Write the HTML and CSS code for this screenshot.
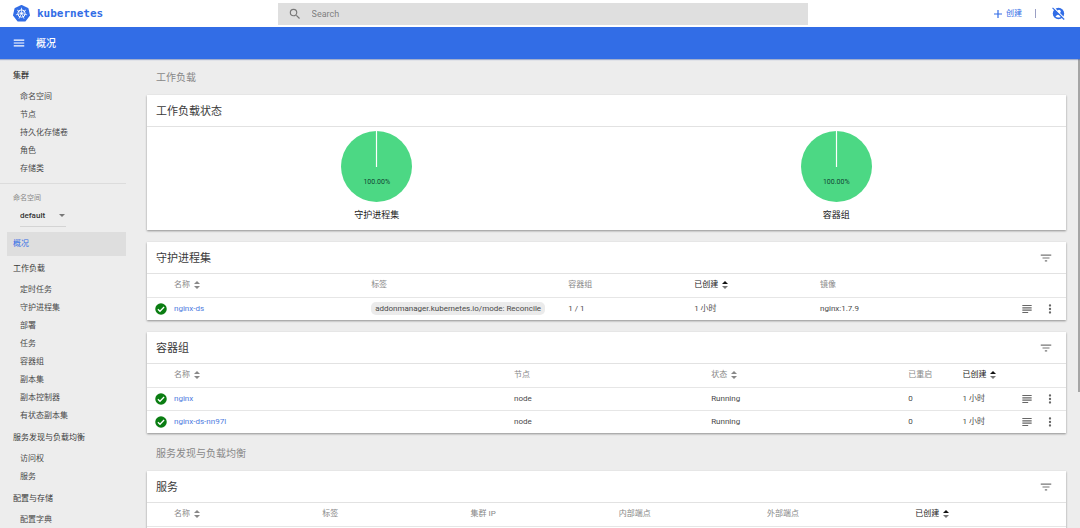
FILE: index.html
```html
<!DOCTYPE html>
<html lang="zh-CN">
<head>
<meta charset="utf-8">
<meta name="viewport" content="width=device-width, initial-scale=1">
<title>概况 - kubernetes</title>
<link rel="stylesheet" href="styles.css">
</head>
<body>
<svg class="defs" aria-hidden="true">
  <symbol id="i-ok" viewBox="0 0 24 24"><circle cx="12" cy="12" r="11.5" fill="#0a7d12"/><path d="M5.8 12.4l4.2 4.1 8.2-8.4" fill="none" stroke="#fff" stroke-width="2.6"/></symbol>
  <symbol id="i-filter" viewBox="0 0 24 24"><path d="M10 18h4v-2h-4v2zM3 6v2h18V6H3zm3 7h12v-2H6v2z"/></symbol>
  <symbol id="i-logs" viewBox="0 0 24 24"><path d="M14 17H4v2h10v-2zm6-8H4v2h16V9zM4 15h16v-2H4v2zM4 5v2h16V5H4z"/></symbol>
  <symbol id="i-more" viewBox="0 0 24 24"><path d="M12 8a2 2 0 1 0 0-4 2 2 0 0 0 0 4zm0 2a2 2 0 1 0 0 4 2 2 0 0 0 0-4zm0 6a2 2 0 1 0 0 4 2 2 0 0 0 0-4z"/></symbol>
  <symbol id="i-sort" viewBox="0 0 6 8"><path d="M0 3l3-3 3 3z"/><path d="M0 5l3 3 3-3z"/></symbol>
  <symbol id="i-sorted" viewBox="0 0 6 8"><path d="M0 3l3-3 3 3z" fill="#111"/><path d="M0 5l3 3 3-3z" fill="#777"/></symbol>
  <symbol id="i-pie" viewBox="0 0 71 71"><circle cx="35.5" cy="35.5" r="35.5" fill="#4cd884"/><path d="M35.5 0v36" stroke="#fff" stroke-width="1.2"/></symbol>
</svg>

<header class="top">
  <a class="brand" href="#">
    <svg class="brand-mark" viewBox="0 0 34 34" aria-hidden="true">
      <path d="M17 1.5L29.5 7.5L32.5 20.8L24 31.5H10L1.5 20.8L4.500 7.500Z" fill="#326de6" stroke="#326de6" stroke-width="3" stroke-linejoin="round"/>
      <g fill="none" stroke="#fff">
        <circle cx="17" cy="17" r="7.4" stroke-width="2"/>
        <path stroke-width="1.500" d="M17 15V5.500M18.600 15.700L26 9.800M19 17.500L28.200 19.600M18 18.800L22.100 27.400M16 18.800L11.900 27.400M15 17.500L5.800 19.600M15.400 15.700L8 9.800"/>
      </g>
      <circle cx="17" cy="17" r="2.400" fill="#fff"/>
    </svg>
    <span>kubernetes</span>
  </a>
  <form class="search" role="search">
    <svg class="icon" viewBox="0 0 24 24" aria-hidden="true"><path d="M15.500 14h-.79l-.28-.27A6.470 6.470 0 0 0 16 9.500 6.500 6.500 0 1 0 9.500 16c1.610 0 3.090-.59 4.230-1.570l.27.28v.79l5 4.990L20.490 19l-4.990-5zm-6 0a4.500 4.500 0 1 1 0-9 4.500 4.500 0 0 1 0 9z"/></svg>
    <input type="search" placeholder="Search" aria-label="Search">
  </form>
  <div class="tools">
    <button class="create" type="button">
      <svg viewBox="0 0 8 8" aria-hidden="true"><path d="M4 0v8M0 4h8" stroke="currentColor" stroke-width="1.200"/></svg>
      创建
    </button>
    <span class="divider"></span>
    <button class="account" type="button" aria-label="用户">
      <svg viewBox="0 0 24 24" aria-hidden="true">
        <circle cx="12" cy="12" r="10.500" fill="#326de6"/>
        <circle cx="13" cy="8.500" r="3.200" fill="#fff"/>
        <path d="M6.500 17.500c1.500-2.500 3.500-3.300 5.500-3.300s4 .8 5.500 3.300c-2.500 2.800-8.500 2.800-11 0z" fill="#fff"/>
        <path d="M3 1l20 20" stroke="#fff" stroke-width="2.500"/>
        <path d="M1 1.500L22.500 23" stroke="#326de6" stroke-width="2.200"/>
      </svg>
    </button>
  </div>
</header>

<div class="bar">
  <button type="button" aria-label="菜单"><svg class="icon" viewBox="0 0 24 24" aria-hidden="true"><path d="M3 18h18v-2H3v2zm0-5h18v-2H3v2zm0-7v2h18V6H3z"/></svg></button>
  <h1>概况</h1>
</div>

<div class="page">
  <nav class="side">
    <section class="group">
      <h2 class="strong">集群</h2>
      <a href="#">命名空间</a><a href="#">节点</a><a href="#">持久化存储卷</a><a href="#">角色</a><a href="#">存储类</a>
    </section>
    <div class="namespace">
      <label for="ns">命名空间</label>
      <div class="select">
        <select id="ns"><option>default</option></select>
        <svg viewBox="0 0 6 3" aria-hidden="true"><path d="M0 0h6L3 3z"/></svg>
      </div>
    </div>
    <a class="current" href="#" aria-current="page">概况</a>
    <section class="group">
      <h2>工作负载</h2>
      <a href="#">定时任务</a><a href="#">守护进程集</a><a href="#">部署</a><a href="#">任务</a><a href="#">容器组</a><a href="#">副本集</a><a href="#">副本控制器</a><a href="#">有状态副本集</a>
    </section>
    <section class="group">
      <h2>服务发现与负载均衡</h2>
      <a href="#">访问权</a><a href="#">服务</a>
    </section>
    <section class="group">
      <h2>配置与存储</h2>
      <a href="#">配置字典</a>
    </section>
  </nav>

  <main class="content">
    <section>
      <h2 class="area">工作负载</h2>
      <article class="card">
        <header><h3>工作负载状态</h3></header>
        <div class="charts">
          <figure>
            <div class="pie"><svg aria-hidden="true"><use href="#i-pie"/></svg><span>100.00%</span></div>
            <figcaption>守护进程集</figcaption>
          </figure>
          <figure>
            <div class="pie"><svg aria-hidden="true"><use href="#i-pie"/></svg><span>100.00%</span></div>
            <figcaption>容器组</figcaption>
          </figure>
        </div>
      </article>

      <article class="card">
        <header><h3>守护进程集</h3><button type="button" aria-label="筛选"><svg class="icon"><use href="#i-filter"/></svg></button></header>
        <table>
          <colgroup><col class="c-status"><col class="c-wide"><col class="c-wide"><col class="c-mid"><col class="c-mid"><col><col class="c-actions"></colgroup>
          <thead><tr><th></th><th>名称 <svg class="sort"><use href="#i-sort"/></svg></th><th>标签</th><th>容器组</th><th class="sorted">已创建 <svg class="sort"><use href="#i-sorted"/></svg></th><th>镜像</th><th></th></tr></thead>
          <tbody>
            <tr>
              <td><svg class="ok"><use href="#i-ok"/></svg></td>
              <td><a href="#">nginx-ds</a></td>
              <td><span class="chip">addonmanager.kubernetes.io/mode: Reconcile</span></td>
              <td>1 / 1</td><td>1 小时</td><td>nginx:1.7.9</td>
              <td><div class="actions"><button type="button" aria-label="日志"><svg class="icon"><use href="#i-logs"/></svg></button><button type="button" aria-label="操作"><svg class="icon"><use href="#i-more"/></svg></button></div></td>
            </tr>
          </tbody>
        </table>
      </article>

      <article class="card">
        <header><h3>容器组</h3><button type="button" aria-label="筛选"><svg class="icon"><use href="#i-filter"/></svg></button></header>
        <table>
          <colgroup><col class="c-status"><col class="c-widest"><col class="c-wide"><col class="c-wide"><col class="c-slim"><col><col class="c-actions"></colgroup>
          <thead><tr><th></th><th>名称 <svg class="sort"><use href="#i-sort"/></svg></th><th>节点</th><th>状态 <svg class="sort"><use href="#i-sort"/></svg></th><th>已重启</th><th class="sorted">已创建 <svg class="sort"><use href="#i-sorted"/></svg></th><th></th></tr></thead>
          <tbody>
            <tr>
              <td><svg class="ok"><use href="#i-ok"/></svg></td>
              <td><a href="#">nginx</a></td><td>node</td><td>Running</td><td>0</td><td>1 小时</td>
              <td><div class="actions"><button type="button" aria-label="日志"><svg class="icon"><use href="#i-logs"/></svg></button><button type="button" aria-label="操作"><svg class="icon"><use href="#i-more"/></svg></button></div></td>
            </tr>
            <tr>
              <td><svg class="ok"><use href="#i-ok"/></svg></td>
              <td><a href="#">nginx-ds-nn97l</a></td><td>node</td><td>Running</td><td>0</td><td>1 小时</td>
              <td><div class="actions"><button type="button" aria-label="日志"><svg class="icon"><use href="#i-logs"/></svg></button><button type="button" aria-label="操作"><svg class="icon"><use href="#i-more"/></svg></button></div></td>
            </tr>
          </tbody>
        </table>
      </article>
    </section>

    <section>
      <h2 class="area">服务发现与负载均衡</h2>
      <article class="card">
        <header><h3>服务</h3><button type="button" aria-label="筛选"><svg class="icon"><use href="#i-filter"/></svg></button></header>
        <table>
          <colgroup><col class="c-status"><col class="c-even"><col class="c-even"><col class="c-even"><col class="c-even"><col class="c-even"><col></colgroup>
          <thead><tr><th></th><th>名称 <svg class="sort"><use href="#i-sort"/></svg></th><th>标签</th><th>集群 IP</th><th>内部端点</th><th>外部端点</th><th class="sorted">已创建 <svg class="sort"><use href="#i-sorted"/></svg></th></tr></thead>
          <tbody><tr><td colspan="7"></td></tr></tbody>
        </table>
      </article>
    </section>
  </main>
  <div class="thumb"></div>
</div>
</body>
</html>
```
FILE: styles.css
```css
* {
  box-sizing: border-box;
}

body {
  margin: 0;
  height: 100vh;
  display: flex;
  flex-direction: column;
  overflow: hidden;
  background: #ededed;
  color: #4a4a4a;
  font: 8px/14px Roboto, "Noto Sans CJK SC", sans-serif;
}

h1, h2, h3, figure {
  margin: 0;
  font-weight: 400;
}

a {
  color: inherit;
  text-decoration: none;
}

button, input, select {
  margin: 0;
  padding: 0;
  border: 0;
  background: none;
  color: inherit;
  font: inherit;
}

button {
  display: flex;
  align-items: center;
}

.defs {
  display: none;
}

.icon {
  width: 14px;
  height: 14px;
  display: block;
  fill: currentColor;
}

/* Header */
.top {
  flex: none;
  height: 27px;
  display: grid;
  grid-template-columns: 25.7% 49.1% 1fr;
  align-items: center;
  background: #fff;
}

.brand {
  display: flex;
  align-items: center;
  gap: 7px;
  padding-left: 13px;
  color: #326de6;
  font: 700 11px/16px "DejaVu Sans Mono", monospace;
}

.brand-mark {
  width: 17px;
  height: 17px;
}

.search {
  display: flex;
  align-items: center;
  gap: 10px;
  height: 22px;
  padding: 0 10px;
  background: #dfdfdf;
  color: #777;
}

.search input {
  flex: 1;
  min-width: 0;
  outline: 0;
  appearance: none;
  font-size: 9px;
}

.search input::placeholder {
  color: #808080;
}

.tools {
  display: flex;
  align-items: center;
  justify-content: flex-end;
  gap: 13px;
  padding-right: 15px;
  color: #326de6;
}

.create {
  gap: 4px;
}

.create svg {
  width: 8px;
  height: 8px;
}

.divider {
  width: 1px;
  height: 9px;
  margin-right: 3px;
  background: #9a9fc4;
}

.account svg {
  width: 13px;
  height: 13px;
}

.bar {
  flex: none;
  height: 32px;
  display: flex;
  align-items: center;
  gap: 10px;
  padding-left: 12px;
  background: #326de6;
  color: #fff;
  box-shadow: 0 1px 1px rgba(50, 80, 160, .4);
  z-index: 1;
}

.bar h1 {
  padding-top: 2px;
  font-size: 10px;
  font-weight: 500;
}

/* Body */
.page {
  position: relative;
  flex: 1;
  min-height: 0;
  display: flex;
  overflow: hidden;
}

.thumb {
  position: absolute;
  top: 0;
  right: 0;
  width: 2px;
  height: 71%;
  background: #a5a5a5;
}

.side {
  flex: none;
  width: 126px;
  padding-top: 4px;
}

.group {
  padding-top: 1px;
}

.group h2 {
  padding-left: 13px;
  font-size: 8px;
  line-height: 24px;
  color: #3a3a3a;
}

.group .strong {
  font-weight: 500;
}

.group a {
  display: block;
  padding-left: 20px;
  line-height: 18px;
}

.namespace {
  margin: 5px 0;
  padding: 7px 0 0 13px;
  border-top: 1px solid #dcdcdc;
}

.namespace label {
  display: block;
  color: #888;
  font-size: 7px;
}

.select {
  display: flex;
  align-items: center;
  justify-content: space-between;
  width: 46px;
  margin-left: 7px;
  border-bottom: 1px solid #d4d4d4;
}

.select select {
  flex: 1;
  height: 21px;
  appearance: none;
  color: #333;
  font-weight: 500;
}

.select svg {
  width: 6px;
  height: 3px;
  margin-right: 1px;
  fill: #777;
}

.current {
  display: block;
  margin-left: 7px;
  padding-left: 6px;
  background: #dedede;
  color: #326de6;
  line-height: 24px;
}

.content {
  flex: 1;
  min-width: 0;
  padding: 0 14px 0 21px;
}

.area {
  padding: 2px 0 0 9px;
  color: #888;
  font-size: 10px;
  line-height: 34px;
}

section + section .area {
  padding-top: 4px;
}

.card {
  background: #fff;
  box-shadow: 0 1px 2px rgba(0, 0, 0, .4);
}

.card + .card {
  margin-top: 12px;
}

.card header {
  display: flex;
  align-items: center;
  justify-content: space-between;
  height: 32px;
  padding: 0 13px 0 9px;
  border-bottom: 1px solid #e2e2e2;
  color: #777;
}

.card h3 {
  padding-top: 2px;
  color: #3a3a3a;
  font-size: 11px;
}

.charts {
  display: flex;
  padding: 4px 0 8px;
}

.charts figure {
  flex: 1;
  display: flex;
  flex-direction: column;
  align-items: center;
  gap: 6px;
}

.pie {
  display: grid;
}

.pie > * {
  grid-area: 1 / 1;
}

.pie svg {
  width: 71px;
  height: 71px;
}

.pie span {
  align-self: center;
  padding-top: 31px;
  color: #143;
  font-size: 7px;
  text-align: center;
}

figcaption {
  color: #222;
  font-size: 9px;
}

/* Tables */
table {
  width: 100%;
  table-layout: fixed;
  border-collapse: collapse;
}

.c-status { width: 27px; }
.c-actions { width: 48px; }
.c-slim { width: 5.9%; }
.c-mid { width: 13.7%; }
.c-even { width: 16.13%; }
.c-wide { width: 21.45%; }
.c-widest { width: 37%; }

th, td {
  height: 23px;
  padding: 0;
  text-align: left;
  font-weight: 400;
  white-space: nowrap;
}

tbody td {
  border-top: 1px solid #e6e6e6;
}

th {
  color: #888;
}

.sorted {
  color: #222;
}

td a {
  color: #4d7be0;
}

.sort {
  width: 6px;
  height: 8px;
  margin-left: 2px;
  vertical-align: middle;
  fill: #888;
}

.ok {
  display: block;
  width: 12px;
  height: 12px;
  margin-left: 8px;
}

.chip {
  display: inline-block;
  padding: 0 4px;
  border-radius: 5px;
  background: #ebebeb;
  line-height: 13px;
}

.actions {
  display: flex;
  justify-content: space-between;
  width: 37px;
  margin-left: 2px;
  color: #666;
}
```
